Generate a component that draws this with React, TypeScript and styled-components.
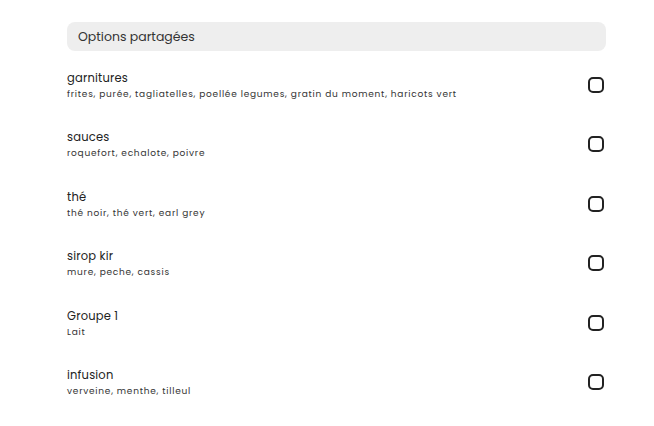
import styled, { createGlobalStyle } from "styled-components";

const GlobalStyle = createGlobalStyle`
  body {
    margin: 0;
    background: #ffffff;
    font-family: "Poppins", "DejaVu Sans", sans-serif;
    color: #222222;
  }
`;

type OptionGroup = {
  name: string;
  choices: string;
};

const groups: OptionGroup[] = [
  {
    name: "garnitures",
    choices:
      "frites, purée, tagliatelles, poellée legumes, gratin du moment, haricots vert",
  },
  { name: "sauces", choices: "roquefort, echalote, poivre" },
  { name: "thé", choices: "thé noir, thé vert, earl grey" },
  { name: "sirop kir", choices: "mure, peche, cassis" },
  { name: "Groupe 1", choices: "Lait" },
  { name: "infusion", choices: "verveine, menthe, tilleul" },
];

const Page = styled.div`
  width: 539px;
  padding: 22px 0 0 67px;
`;

const SectionHeader = styled.div`
  display: flex;
  align-items: center;
  height: 29px;
  padding: 0 11px;
  border-radius: 8px;
  background: #eeeeee;
  font-size: 12.5px;
  color: #333333;
`;

const List = styled.div`
  display: flex;
  flex-direction: column;
  padding-top: 4px;
`;

const Row = styled.label`
  display: flex;
  align-items: center;
  justify-content: space-between;
  height: 59.5px;
  cursor: pointer;
`;

const Texts = styled.div`
  display: flex;
  flex-direction: column;
`;

const Title = styled.span`
  font-size: 11.5px;
  line-height: 18px;
  letter-spacing: 0.2px;
  color: #222222;
`;

const Choices = styled.span`
  font-size: 9px;
  line-height: 14px;
  letter-spacing: 0.75px;
  color: #333333;
`;

const Checkbox = styled.span`
  box-sizing: border-box;
  width: 16px;
  height: 16px;
  margin-right: 2px;
  border: 2px solid #222222;
  border-radius: 5px;
`;

export default function App() {
  return (
    <>
      <GlobalStyle />
      <Page>
        <SectionHeader>Options partagées</SectionHeader>
        <List>
          {groups.map((g) => (
            <Row key={g.name}>
              <Texts>
                <Title>{g.name}</Title>
                <Choices>{g.choices}</Choices>
              </Texts>
              <Checkbox />
            </Row>
          ))}
        </List>
      </Page>
    </>
  );
}
